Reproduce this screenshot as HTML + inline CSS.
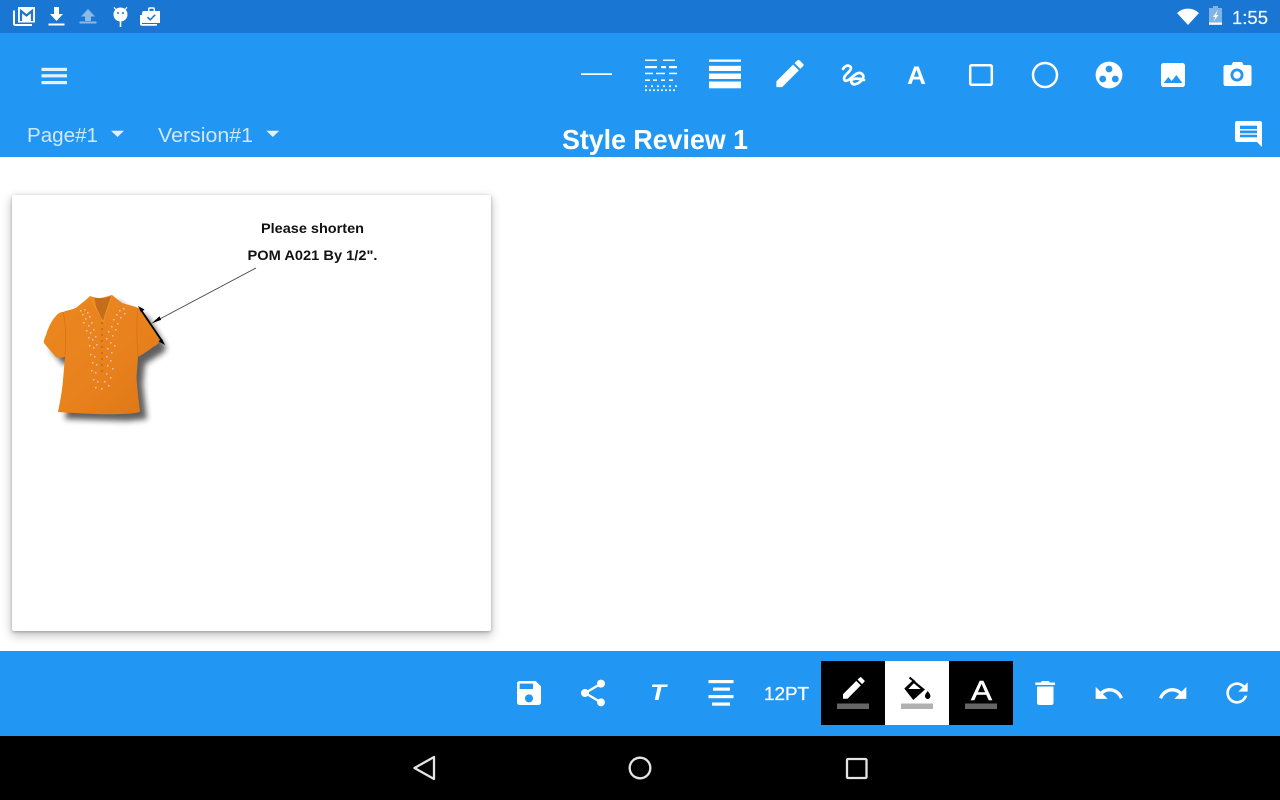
<!DOCTYPE html>
<html>
<head>
<meta charset="utf-8">
<style>
html,body{margin:0;padding:0;width:1280px;height:800px;overflow:hidden;background:#fff}
#card{position:absolute;left:12px;top:195px;width:479px;height:436px;background:#fff;border-radius:2px;box-shadow:0 1px 3px rgba(0,0,0,.25),0 4px 10px 1px rgba(0,0,0,.22)}
svg{position:absolute;left:0;top:0}
text{font-family:"Liberation Sans",sans-serif}
</style>
</head>
<body>
<div id="card"></div>
<svg width="1280" height="800" viewBox="0 0 1280 800" xmlns="http://www.w3.org/2000/svg">
<defs>
<filter id="bl" x="-30%" y="-30%" width="160%" height="160%"><feGaussianBlur stdDeviation="3"/></filter>
<linearGradient id="sh" x1="0" y1="0" x2="1" y2="1"><stop offset="0" stop-color="#ec8820"/><stop offset=".6" stop-color="#e8811c"/><stop offset="1" stop-color="#dc7614"/></linearGradient>
</defs>

<!-- bars -->
<rect x="0" y="0" width="1280" height="33" fill="#1976D2"/>
<rect x="0" y="33" width="1280" height="124" fill="#2196F3"/>
<rect x="0" y="651" width="1280" height="85" fill="#2196F3"/>
<rect x="0" y="736" width="1280" height="64" fill="#000"/>

<!-- status left -->
<g fill="#fff">
<rect x="18" y="7" width="17" height="15.500"/>
<path d="M13 10.500h2V24h17v2H15c-1.100 0-2-.9-2-2z"/>
<path d="M21 21V11l5.500 4.500L32 11v10" fill="none" stroke="#1976D2" stroke-width="2.200"/>
<path d="M54 7h5v7h4l-6.500 7-6.500-7h4z"/>
<rect x="48.500" y="23.500" width="16" height="2"/>
<g opacity=".5"><path d="M88 9l7 7.500h-4v4.500h-6v-4.500h-4z"/><rect x="79.500" y="21.500" width="17" height="2"/></g>
<circle cx="120.500" cy="14.500" r="7"/>
<rect x="119.700" y="20" width="1.600" height="7"/>
<path d="M114.500 7l2.500 3-1 .6-2.500-3zM126.500 7l-2.500 3 1 .6 2.500-3z"/>
<circle cx="118" cy="13" r="1" fill="#1976D2"/><circle cx="123" cy="13" r="1" fill="#1976D2"/>
<path d="M144 11h4V9c0-1 .6-1.800 1.700-1.800h3.600c1.100 0 1.700.8 1.700 1.800v2h5v12h-18V13c0-1.100.9-2 2-2zm5.500 0h4V8.800h-4z"/>
<path d="M142 15v9h15v1.800h-15c-1.200 0-2-.8-2-2V15z"/>
<path d="M148 16.500l2.200 2.200 4.500-4.500 1.100 1.100-5.600 5.600-3.300-3.300z" fill="#1976D2"/>
</g>

<!-- status right -->
<path d="M1177 13A16 16 0 0 1 1199 13L1188 25z" fill="#fff"/>
<rect x="1209" y="8" width="13" height="17" fill="#fff" opacity=".45"/>
<rect x="1213" y="6" width="5" height="2" fill="#fff" opacity=".45"/>
<rect x="1209" y="22.500" width="13" height="2.200" fill="#fff"/>
<path d="M1218 10l-5 7h2.500l-2 4.500 5-6.500h-2.500z" fill="#fff"/>
<text x="1232" y="24" font-size="18.500" fill="#f2f7fc" stroke="#f2f7fc" stroke-width=".2" textLength="36" lengthAdjust="spacingAndGlyphs">1:55</text>

<!-- hamburger -->
<g fill="#fff" opacity=".88">
<rect x="41.500" y="67.800" width="25.500" height="3.200"/>
<rect x="41.500" y="74.200" width="25.500" height="3.200"/>
<rect x="41.500" y="81" width="25.500" height="3.200"/>
</g>

<!-- line -->
<rect x="581" y="73.300" width="31" height="1.700" fill="#fff"/>

<!-- dashes -->
<g fill="#fff">
<rect x="645" y="59.500" width="12" height="1.400"/><rect x="663" y="59.500" width="12" height="1.400"/>
<rect x="645" y="66" width="12" height="2.200"/><rect x="661" y="66" width="5" height="2.200"/><rect x="669" y="66" width="8" height="2.200"/>
<rect x="645" y="72.700" width="8" height="1.500"/><rect x="656" y="72.700" width="9" height="1.500"/><rect x="669" y="72.700" width="8" height="1.500"/>
<rect x="645" y="79.400" width="5" height="1.600"/><rect x="653" y="79.400" width="4" height="1.600"/><rect x="661" y="79.400" width="4" height="1.600"/><rect x="669" y="79.400" width="4" height="1.600"/>
<g opacity=".9">
<rect x="645" y="85.300" width="2" height="1.800"/><rect x="651" y="85.300" width="2" height="1.800"/><rect x="657" y="85.300" width="2" height="1.800"/><rect x="663" y="85.300" width="2" height="1.800"/><rect x="669" y="85.300" width="2" height="1.800"/><rect x="675" y="85.300" width="2" height="1.800"/>
<rect x="645" y="89.300" width="2" height="1.800"/><rect x="649" y="89.300" width="2" height="1.800"/><rect x="653" y="89.300" width="2" height="1.800"/><rect x="657" y="89.300" width="2" height="1.800"/><rect x="661" y="89.300" width="2" height="1.800"/><rect x="665" y="89.300" width="2" height="1.800"/><rect x="669" y="89.300" width="2" height="1.800"/><rect x="673" y="89.300" width="2" height="1.800"/>
</g>
<!-- weights -->
<rect x="709" y="59.500" width="32" height="2.300"/>
<rect x="709" y="65.800" width="32" height="5.200"/>
<rect x="709" y="73.500" width="32" height="5.500"/>
<rect x="709" y="81.500" width="32" height="6.800"/>
</g>

<!-- pencil -->
<g transform="translate(772 55.500) scale(1.5)" fill="#fff" stroke="#fff" stroke-width=".2"><path d="M3 17.250V21h3.750L17.810 9.940l-3.750-3.750L3 17.250zM20.710 7.040c.39-.39.39-1.020 0-1.410l-2.340-2.340c-.39-.39-1.020-.39-1.410 0l-1.830 1.830 3.750 3.750 1.830-1.830z"/></g>

<!-- scribble -->
<path d="M843 69C846 63.500 852.500 65.500 850.500 69.500C848.500 73.500 842.500 76 844.500 80C846.500 83.500 853 75.500 857 73.500C861 71.500 865 75 862.500 79C860 83 853.500 86.500 851.500 82.500C849.500 78.500 857.500 77.500 864 80" fill="none" stroke="#fff" stroke-width="2.700" stroke-linecap="round" stroke-linejoin="round"/>

<!-- A -->
<text x="907" y="84" font-size="25" font-weight="bold" fill="#fff" textLength="19" lengthAdjust="spacingAndGlyphs">A</text>

<!-- rect -->
<rect x="970.200" y="65.200" width="21.600" height="19.600" rx="1.500" fill="none" stroke="#fff" stroke-width="2.500"/>
<!-- circle -->
<circle cx="1045" cy="75" r="12" fill="none" stroke="#fff" stroke-width="2.500"/>
<!-- blobs -->
<circle cx="1109" cy="75" r="13.400" fill="#fff"/>
<circle cx="1109" cy="69" r="3.400" fill="#2196F3"/>
<circle cx="1102.700" cy="79" r="3.400" fill="#2196F3"/>
<circle cx="1115.300" cy="79" r="3.400" fill="#2196F3"/>
<!-- image -->
<g transform="translate(1157 59) scale(1.333)" fill="#fff"><path d="M21 19V5c0-1.100-.9-2-2-2H5c-1.100 0-2 .9-2 2v14c0 1.100.9 2 2 2h14c1.100 0 2-.9 2-2zM8.500 13.500l2.500 3.010L14.500 12l4.500 6H5l3.500-4.500z"/></g>
<!-- camera -->
<path d="M1225 65h6.500l1.500-3h9l1.500 3h6c1.100 0 2 .9 2 2v17c0 1.100-.9 2-2 2h-24c-1.100 0-2-.9-2-2V67c0-1.100.9-2 2-2z" fill="#fff"/>
<circle cx="1237" cy="75" r="6.500" fill="#2196F3"/>
<circle cx="1237" cy="75" r="3.700" fill="#fff"/>

<!-- tab row -->
<text x="27" y="142" font-size="20" fill="#cfe8fc" textLength="71" lengthAdjust="spacingAndGlyphs">Page#1</text>
<path d="M111 130.700h13l-6.500 6.300z" fill="#e3f1fd"/>
<text x="158" y="142" font-size="20" fill="#cfe8fc" textLength="95" lengthAdjust="spacingAndGlyphs">Version#1</text>
<path d="M266.300 130.700h13l-6.500 6.300z" fill="#e3f1fd"/>
<text x="562" y="149" font-size="28" font-weight="bold" fill="#fff" textLength="186" lengthAdjust="spacingAndGlyphs">Style Review 1</text>

<!-- comment -->
<path d="M1237 121h23c1.100 0 2 .9 2 2v24l-5-5h-20c-1.100 0-2-.9-2-2v-17c0-1.100.9-2 2-2z" fill="#fff"/>
<g fill="#2196F3"><rect x="1240" y="125.700" width="17" height="3.400"/><rect x="1240" y="130.500" width="17" height="2.800"/><rect x="1240" y="134.700" width="17" height="2.600"/></g>

<!-- annotation -->
<text x="261" y="233" font-size="14" font-weight="bold" fill="#111" textLength="103" lengthAdjust="spacingAndGlyphs">Please shorten</text>
<text x="247.500" y="260" font-size="14" font-weight="bold" fill="#111" textLength="130" lengthAdjust="spacingAndGlyphs">POM A021 By 1/2".</text>

<!-- shirt shadow -->
<path d="M90 296L112 295 122 303 138 308C141 310 144 314 146 318L158 338C160 342 158 345 154 347L138 357 136 377 140 412 120 414 58 412 63 380 65 357C60 358 56 358 55 356L44 343C43 341 45 338 46 335 48 328 52 320 55 317 58 313 61 312 63 312L77 307z" fill="#1a1a1a" opacity=".7" filter="url(#bl)" transform="translate(7 7)"/>
<!-- shirt -->
<path d="M90 296C93 297 96 298 99 298 104 298 108 296 112 295L122 303 136 307C139 308 142 311 145 316 149 323 155 332 159 339 160 343 157 345 153 347 148 351 143 354 138 357L136.500 377C137 388 139 401 140 412 132 414 124 414 120 414 100 415 78 413 58 412 60 402 62 392 63 380L65 357C61 358 56 358 55 356 51 351 47 347 44 343 43 341 45 338 46 335 48 328 52 320 55 317 58 313 61 312 63 312 67 310 73 310 77 307 82 303 86 300 90 296z" fill="url(#sh)"/>
<path d="M94.500 297.500C99 299 106 298 111.500 296L108 305 103 321 100 318 96 306z" fill="#b9661a" opacity=".75"/>
<path d="M90 296L98 312 103 322M112 295L107 310 103 322" stroke="#f09a3a" stroke-width="1" fill="none" opacity=".7"/>
<path d="M63 312C66 324 66 342 65 357M138 357C137 342 136 322 138 308" stroke="#c86e14" stroke-width=".8" fill="none" opacity=".7"/>
<path d="M102 322V372" stroke="#a65a10" stroke-width="1.300" stroke-dasharray="2 4" fill="none" opacity=".8"/>
<path fill="#f4bfb4" d="M80 310h1.500v1.500h-1.500zM84 309h1.500v1.500h-1.500zM82 314h1.500v1.500h-1.500zM87 312h1.500v1.500h-1.500zM85 318h1.500v1.500h-1.500zM89 316h1.500v1.500h-1.500zM83 322h1.500v1.500h-1.500zM88 325h1.500v1.500h-1.500zM91 322h1.500v1.500h-1.500zM86 330h1.500v1.500h-1.500zM90 332h1.500v1.500h-1.500zM93 329h1.500v1.500h-1.500zM88 337h1.500v1.500h-1.500zM92 339h1.500v1.500h-1.500zM95 336h1.500v1.500h-1.500zM89 345h1.500v1.500h-1.500zM93 347h1.500v1.500h-1.500zM96 344h1.500v1.500h-1.500zM90 354h1.500v1.500h-1.500zM94 356h1.500v1.500h-1.500zM92 362h1.500v1.500h-1.500zM96 364h1.500v1.500h-1.500zM91 370h1.500v1.500h-1.500zM95 372h1.500v1.500h-1.500zM93 379h1.500v1.500h-1.500zM97 381h1.500v1.500h-1.500zM95 387h1.500v1.500h-1.500zM123 308h1.500v1.500h-1.500zM119 310h1.500v1.500h-1.500zM124 313h1.500v1.500h-1.500zM116 314h1.500v1.500h-1.500zM120 317h1.500v1.500h-1.500zM113 319h1.500v1.500h-1.500zM117 323h1.500v1.500h-1.500zM111 326h1.500v1.500h-1.500zM115 329h1.500v1.500h-1.500zM108 331h1.500v1.500h-1.500zM112 335h1.500v1.500h-1.500zM106 338h1.500v1.500h-1.500zM110 342h1.500v1.500h-1.500zM114 345h1.500v1.500h-1.500zM107 348h1.500v1.500h-1.500zM111 352h1.500v1.500h-1.500zM106 356h1.500v1.500h-1.500zM110 360h1.500v1.500h-1.500zM107 365h1.500v1.500h-1.500zM112 368h1.500v1.500h-1.500zM106 373h1.500v1.500h-1.500zM110 377h1.500v1.500h-1.500zM104 381h1.500v1.500h-1.500zM108 385h1.500v1.500h-1.500zM101 388h1.500v1.500h-1.500z"/>

<!-- arrows -->
<line x1="256" y1="268" x2="156" y2="321" stroke="#444" stroke-width=".9"/>
<path d="M151.500 323.500l8-7.200 1.600 3.600z" fill="#000"/>
<line x1="141" y1="310" x2="162" y2="341" stroke="#000" stroke-width="1.800"/>
<path d="M138 306l6.500 3.500-3.500 2.800zM165 345l-6.500-3.800 3.400-2.500z" fill="#000"/>

<!-- bottom bar icons -->
<g transform="translate(513 677) scale(1.333)" fill="#fff"><path d="M17 3H5c-1.110 0-2 .9-2 2v14c0 1.100.89 2 2 2h14c1.100 0 2-.9 2-2V7l-4-4zm-5 16c-1.660 0-3-1.340-3-3s1.340-3 3-3 3 1.340 3 3-1.340 3-3 3zm3-10H5V5h10v4z"/></g>
<g transform="translate(577 677) scale(1.333)" fill="#fff"><path d="M18 16.080c-.76 0-1.440.3-1.960.77L8.910 12.700c.05-.23.090-.46.090-.7s-.04-.47-.09-.7l7.050-4.110c.54.5 1.250.81 2.040.81 1.660 0 3-1.340 3-3s-1.340-3-3-3-3 1.340-3 3c0 .24.040.47.090.7L8.040 9.810C7.500 9.310 6.790 9 6 9c-1.660 0-3 1.340-3 3s1.340 3 3 3c.79 0 1.500-.31 2.040-.81l7.120 4.160c-.05.21-.08.43-.08.65 0 1.610 1.310 2.920 2.920 2.920 1.610 0 2.920-1.310 2.920-2.920s-1.310-2.920-2.920-2.920z"/></g>
<text x="650" y="700" font-size="22" font-weight="bold" font-style="italic" fill="#fff" textLength="16" lengthAdjust="spacingAndGlyphs">T</text>
<g fill="#fff">
<rect x="708.500" y="680" width="25" height="3.200"/>
<rect x="713" y="687.500" width="17" height="3.200"/>
<rect x="708.500" y="695" width="25" height="3.200"/>
<rect x="712" y="702.500" width="18" height="3.200"/>
</g>
<text x="764" y="700" font-size="18" fill="#fff" stroke="#fff" stroke-width=".3" textLength="45" lengthAdjust="spacingAndGlyphs">12PT</text>

<!-- swatches -->
<rect x="821" y="661" width="64" height="64" fill="#000"/>
<rect x="885" y="661" width="64" height="64" fill="#fff"/>
<rect x="949" y="661" width="64" height="64" fill="#000"/>
<g transform="translate(839.400 673.500) scale(1.200)" fill="#fff"><path d="M3 17.250V21h3.750L17.810 9.940l-3.750-3.750L3 17.250zM20.710 7.040c.39-.39.39-1.020 0-1.410l-2.340-2.340c-.39-.39-1.020-.39-1.410 0l-1.830 1.830 3.750 3.750 1.830-1.830z"/></g>
<rect x="837" y="703.500" width="32" height="5.500" fill="#666"/>
<path d="M904.300 688.500L913.300 680 925 689.500 913.300 700zM908.300 689H920.700L913.800 683.300z" fill="#000" fill-rule="evenodd"/>
<path d="M909.500 677.500L915 682" stroke="#000" stroke-width="2" fill="none"/>
<path d="M927.700 691c1.200 1.800 2.700 3.200 2.700 5 0 1.600-1.200 3-2.700 3s-2.700-1.400-2.700-3c0-1.800 1.500-3.200 2.700-5z" fill="#000"/>
<rect x="901" y="703.500" width="32" height="5.500" fill="#b0b0b0"/>
<text x="971" y="700" font-size="28" fill="#fff" stroke="#fff" stroke-width=".5" textLength="21" lengthAdjust="spacingAndGlyphs">A</text>
<rect x="965" y="703.500" width="32" height="5.500" fill="#666"/>

<!-- trash -->
<path d="M1037 686.500h16.500v16.500c0 1.100-.9 2-2 2h-12.500c-1.100 0-2-.9-2-2zM1035.300 682.500h5.200l1.500-1.500h6.500l1.500 1.500h5v2.500h-19.700z" fill="#fff"/>
<!-- undo/redo/refresh -->
<g transform="translate(1093 677.500) scale(1.333)" fill="#fff"><path d="M12.500 8c-2.650 0-5.050.99-6.900 2.600L2 7v9h9l-3.620-3.620c1.390-1.160 3.160-1.880 5.120-1.880 3.540 0 6.550 2.310 7.600 5.500l2.370-.78C21.080 11.030 17.150 8 12.500 8z"/></g>
<g transform="translate(1157 677.500) scale(1.333)" fill="#fff"><path d="M18.400 10.600C16.550 8.990 14.150 8 11.500 8c-4.650 0-8.580 3.030-9.960 7.220L3.900 16c1.050-3.190 4.050-5.500 7.600-5.500 1.950 0 3.730.72 5.120 1.880L13 16h9V7l-3.600 3.600z"/></g>
<g transform="translate(1221 677) scale(1.333)" fill="#fff"><path d="M17.650 6.350C16.200 4.900 14.210 4 12 4c-4.420 0-7.990 3.580-7.990 8s3.570 8 7.990 8c3.730 0 6.840-2.550 7.730-6h-2.080c-.82 2.330-3.040 4-5.650 4-3.310 0-6-2.690-6-6s2.690-6 6-6c1.660 0 3.140.69 4.220 1.780L13 11h7V4l-2.350 2.350z"/></g>

<!-- nav -->
<g fill="none" stroke="#e4e4e4" stroke-width="2.300" stroke-linejoin="round">
<path d="M434 757v22l-19.500-11z"/>
<circle cx="640" cy="768" r="10.300"/>
<rect x="847" y="759" width="19.500" height="19" rx="1"/>
</g>
</svg>
</body>
</html>
